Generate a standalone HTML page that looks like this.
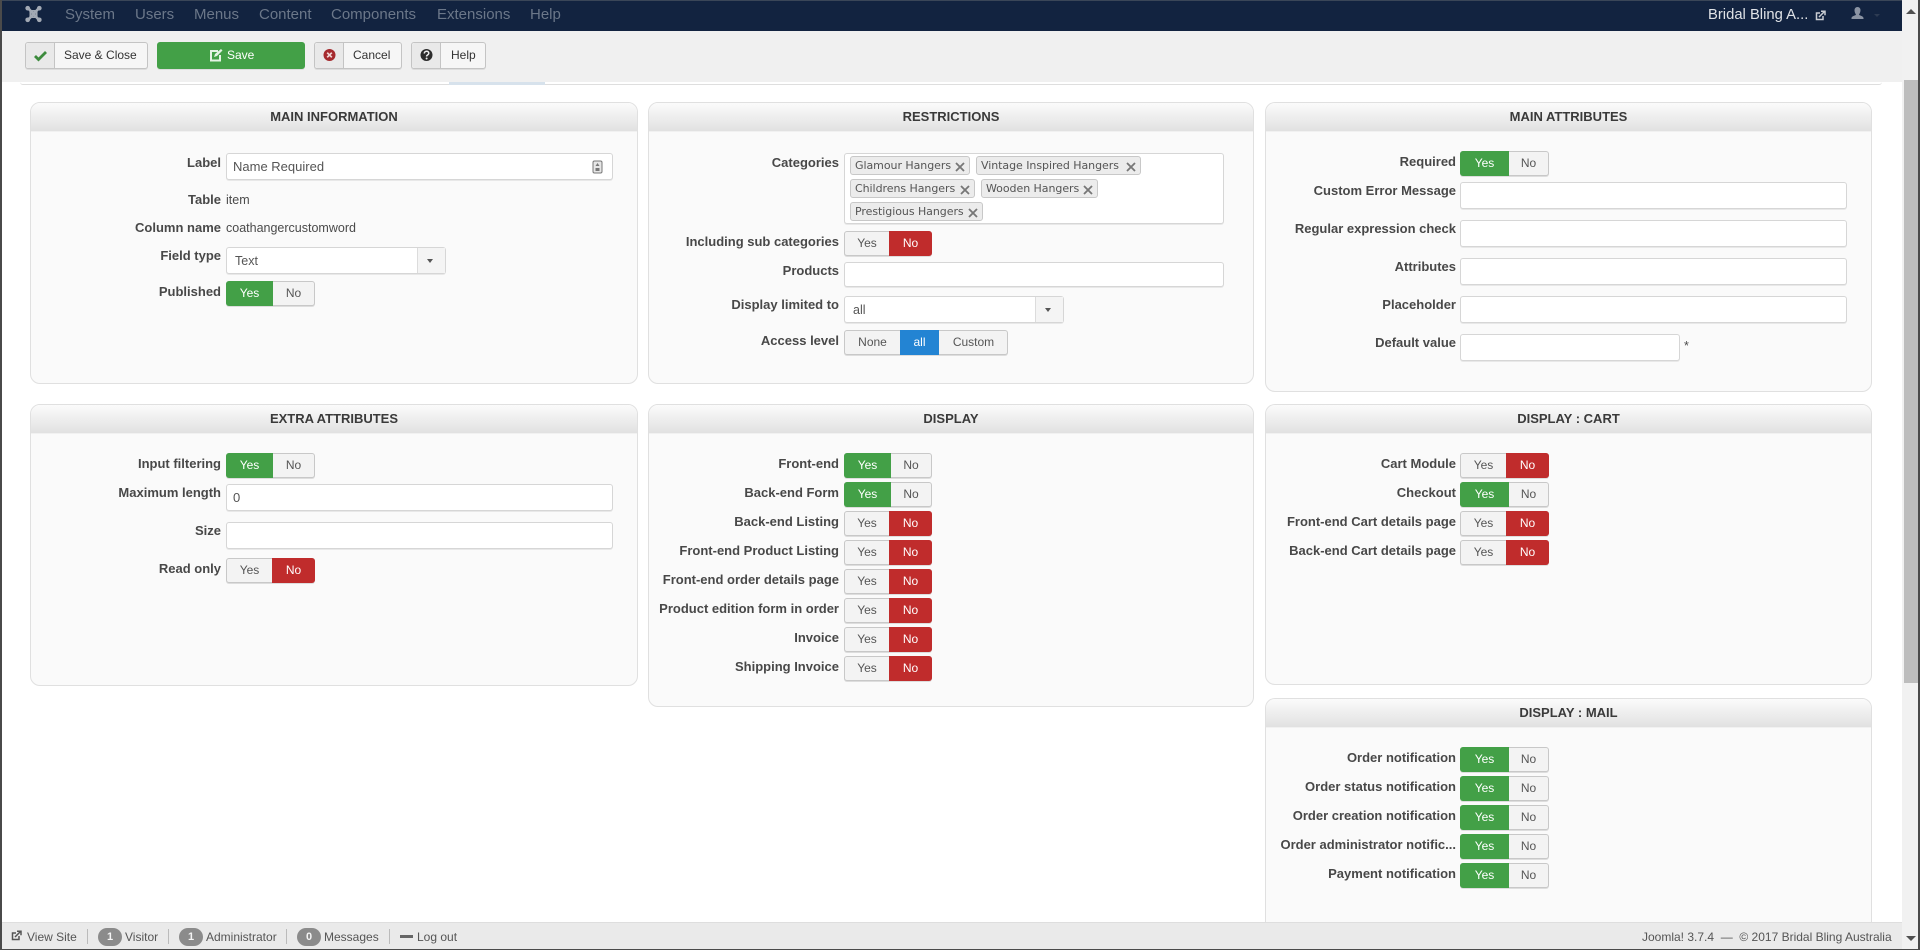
<!DOCTYPE html>
<html lang="en"><head><meta charset="utf-8"><title>Field edit</title>
<style>
*{box-sizing:border-box}
html,body{margin:0;padding:0;width:1920px;height:950px;overflow:hidden;background:#fff;font-family:"Liberation Sans",Arial,sans-serif;color:#444}
#w{position:absolute;left:0;top:0;width:1920px;height:950px;overflow:hidden}
.a,.l,.v,.p,.h,.t,.i,.s,.tg,.b,.f,.n{position:absolute}
.nav{position:absolute;left:0;top:0;width:1902px;height:31px;background:#122340;border-top:1px solid #3a4658}
.n{top:6px;font-size:15px;line-height:18px;color:#6b7789;white-space:nowrap}
.bar{position:absolute;left:0;top:31px;width:1902px;height:51px;background:#f0f0f0}
.b{top:42px;height:27px;border:1px solid #c4c4c4;border-radius:3px;background:#f6f6f6;font-size:12px;line-height:25px;color:#333;box-shadow:0 1px 0 #ddd}
.b em{position:absolute;left:0;top:0;bottom:0;width:29px;background:#e9e9e9;border-right:1px solid #c4c4c4;border-radius:3px 0 0 3px}
.b em svg{position:absolute;left:7px;top:5px}
.b span{position:absolute;white-space:nowrap}
.p{background:#fafafa;border:1px solid #e0e0e0;border-radius:10px;overflow:hidden}
.h{left:0;right:0;top:0;height:29px;background:linear-gradient(#fbfbfb,#e1e1e1);text-align:center;font-weight:bold;font-size:13px;line-height:28px;color:#3a3a3a;border-bottom:1px solid #f1f1f1}
.l{font-weight:bold;font-size:13px;line-height:18px;color:#484848;text-align:right;white-space:nowrap}
.c1{left:30px;width:191px}.c2{left:640px;width:199px}.c3{left:1260px;width:196px}
.v{font-size:12.5px;line-height:18px;color:#4a4a4a;white-space:nowrap}
.i{height:27px;background:#fff;border:1px solid #d6d6d6;border-radius:3px;font-size:13px;line-height:25px;padding-left:6px;color:#555;box-shadow:0 1px 0 #e8e8e8}
.s{height:27px;background:#fff;border:1px solid #d6d6d6;border-radius:3px;font-size:12.5px;line-height:27px;padding-left:8px;color:#555;box-shadow:0 1px 0 #e8e8e8}
.s u{position:absolute;right:0;top:0;bottom:0;width:28px;background:#f4f4f4;border-left:1px solid #dcdcdc;text-decoration:none}
.s u:after{content:"";position:absolute;left:9px;top:11px;border:3.500px solid transparent;border-top:4px solid #555;border-bottom:0}
.t{width:89px;height:25px;border:1px solid #c8c8c8;border-radius:3px;background:#f3f3f3;font-size:12px;line-height:24px;color:#555;box-shadow:0 1px 0 #ddd}
.t b,.t i{position:absolute;top:-1px;bottom:-1px;font-weight:normal;font-style:normal;text-align:center;color:#555}
.ty b{left:-1px;width:47px;background:#43a047;color:#fff;border-radius:3px 0 0 3px}
.ty i{left:46px;width:41px}
.tn b{left:0;width:45px}
.tn i{left:45px;width:43px;right:-1px;background:#c02c2c;color:#fff;border-radius:0 3px 3px 0}
.m{width:88px}
.m.tn b{width:44px}.m.tn i{left:44px}
.m.ty i{width:40px}
.w.ty b{width:49px}.w.ty i{left:48px;width:39px}
.tg{height:19px;background:#ececec;border:1px solid #c8c8c8;border-radius:3px;font-family:"DejaVu Sans",sans-serif;font-size:11px;line-height:17px;padding-left:4px;color:#555;white-space:nowrap;letter-spacing:-.05px}
.tg svg{position:absolute;right:4px;top:5px}
.foot{position:absolute;left:0;top:922px;width:1902px;height:27px;background:#eaeaea;border-top:1px solid #dedede}
.f{top:6px;font-size:12px;line-height:16px;color:#555;white-space:nowrap}
.o{position:absolute;top:5px;height:18px;width:24px;background:#8b8b8b;border-radius:9px;color:#f4f4f4;font-size:11px;font-weight:bold;line-height:18px;text-align:center}
.sp{position:absolute;top:6px;width:1px;height:15px;background:#bbb}
</style></head><body><div id="w">

<div class="nav"></div>
<svg class="a" style="left:25px;top:5px" width="17" height="18" viewBox="0 0 19 20"><g fill="none" stroke="#a2a9b4" stroke-width="3" stroke-linecap="round"><path d="M4 4l11 12M15 4L4 16"/><path d="M6 6.500h7v7H6z" stroke-width="2"/></g><g fill="#a2a9b4"><circle cx="3" cy="3.500" r="2.600"/><circle cx="16" cy="3.500" r="2.600"/><circle cx="3" cy="16.500" r="2.600"/><circle cx="16" cy="16.500" r="2.600"/></g></svg>
<div class="n" style="left:65px">System</div>
<div class="n" style="left:135px">Users</div>
<div class="n" style="left:194px">Menus</div>
<div class="n" style="left:259px">Content</div>
<div class="n" style="left:331px">Components</div>
<div class="n" style="left:437px">Extensions</div>
<div class="n" style="left:530px">Help</div>
<div class="n" style="left:1708px;color:#dfe2e6;font-size:14.8px">Bridal Bling A...</div>
<svg class="a" style="left:1815px;top:10px" width="11" height="11" viewBox="0 0 11 11"><path d="M8 6v3.500H1.500V3H5" fill="none" stroke="#c9cdd3" stroke-width="1.500"/><path d="M4 7l5-5M6 1.200h4v4" fill="none" stroke="#c9cdd3" stroke-width="1.500"/></svg>
<svg class="a" style="left:1851px;top:7px" width="13" height="13" viewBox="0 0 13 13"><path d="M6.500 0c2 0 3 1.500 3 3.300S8.500 7 8 7.500c0 1 4.500 1.500 4.500 3.500v1H.500v-1C.500 9 5 8.500 5 7.500 4.500 7 3.500 5.100 3.500 3.300S4.500 0 6.500 0z" fill="#8a93a3"/></svg>
<div class="a" style="left:1874px;top:14px;border:3px solid transparent;border-top:3px solid #2d3b52"></div>

<div class="bar"></div>
<div class="a" style="left:20px;top:82px;width:1862px;height:3px;background:#fff;border-bottom:1px solid #dedede;border-radius:0 0 5px 5px"></div>
<div class="a" style="left:449px;top:82px;width:96px;height:3px;background:#d7e2ec"></div>

<div class="b" style="left:25px;width:123px"><em><svg width="15" height="15" viewBox="0 0 15 15"><path d="M2 8l3.500 3.500L13 4" fill="none" stroke="#3d8b3d" stroke-width="2.800"/></svg></em><span style="left:38px">Save &amp; Close</span></div>
<div class="b" style="left:157px;width:148px;background:#43a047;border-color:#43a047;color:#fff"><svg class="a" style="left:51px;top:5px" width="14" height="14" viewBox="0 0 14 14"><path d="M9 3H2v9.500h9V7" fill="none" stroke="#e4f3e4" stroke-width="2"/><path d="M5 9l1-3 6-5 1.500 1.500L8 8z" fill="#e4f3e4"/></svg><span style="left:69px;font-size:12px">Save</span></div>
<div class="b" style="left:314px;width:88px"><em><svg width="15" height="15" viewBox="0 0 15 15"><circle cx="7.500" cy="7" r="6" fill="#a52a2e"/><path d="M5.200 4.700l4.600 4.600M9.800 4.700l-4.600 4.600" stroke="#f0d8d8" stroke-width="1.700"/></svg></em><span style="left:38px">Cancel</span></div>
<div class="b" style="left:411px;width:75px"><em><svg width="15" height="15" viewBox="0 0 15 15"><circle cx="7.500" cy="7" r="6" fill="#2c2c2c"/><path d="M5.300 5.500c0-3 4.500-3 4.500-.2 0 1.700-2.200 1.500-2.200 3.200" fill="none" stroke="#eee" stroke-width="1.500"/><circle cx="7.600" cy="10.500" r="1" fill="#eee"/></svg></em><span style="left:39px">Help</span></div>

<!-- MAIN INFORMATION -->
<div class="p" style="left:30px;top:102px;width:608px;height:282px"><div class="h">MAIN INFORMATION</div></div>
<div class="l c1" style="top:154px">Label</div>
<div class="i" style="left:226px;top:153px;width:387px">Name Required<svg class="a" style="right:9px;top:6px" width="11" height="14" viewBox="0 0 11 14"><rect x="1" y="1" width="9" height="12" rx="1.500" fill="#e6e6e6" stroke="#777"/><path d="M5.500 3l2 3h-4zM3.500 8h4v3h-4z" fill="#777"/></svg></div>
<div class="l c1" style="top:191px">Table</div><div class="v" style="left:226px;top:191px">item</div>
<div class="l c1" style="top:219px">Column name</div><div class="v" style="left:226px;top:219px">coathangercustomword</div>
<div class="l c1" style="top:247px">Field type</div>
<div class="s" style="left:226px;top:247px;width:220px">Text<u></u></div>
<div class="l c1" style="top:283px">Published</div>
<div class="t ty" style="left:226px;top:281px"><b>Yes</b><i>No</i></div>

<!-- RESTRICTIONS -->
<div class="p" style="left:648px;top:102px;width:606px;height:282px"><div class="h">RESTRICTIONS</div></div>
<div class="l c2" style="top:154px">Categories</div>
<div class="i" style="left:844px;top:153px;width:380px;height:71px"></div>
<div class="tg" style="left:850px;top:156px;width:120px">Glamour Hangers<svg width="10" height="10" viewBox="0 0 10 10"><path d="M1 1l8 8M9 1L1 9" stroke="#777" stroke-width="1.800"/></svg></div>
<div class="tg" style="left:976px;top:156px;width:165px">Vintage Inspired Hangers<svg width="10" height="10" viewBox="0 0 10 10"><path d="M1 1l8 8M9 1L1 9" stroke="#777" stroke-width="1.800"/></svg></div>
<div class="tg" style="left:850px;top:179px;width:125px">Childrens Hangers<svg width="10" height="10" viewBox="0 0 10 10"><path d="M1 1l8 8M9 1L1 9" stroke="#777" stroke-width="1.800"/></svg></div>
<div class="tg" style="left:981px;top:179px;width:117px">Wooden Hangers<svg width="10" height="10" viewBox="0 0 10 10"><path d="M1 1l8 8M9 1L1 9" stroke="#777" stroke-width="1.800"/></svg></div>
<div class="tg" style="left:850px;top:202px;width:133px">Prestigious Hangers<svg width="10" height="10" viewBox="0 0 10 10"><path d="M1 1l8 8M9 1L1 9" stroke="#777" stroke-width="1.800"/></svg></div>
<div class="l c2" style="top:233px">Including sub categories</div>
<div class="t tn m" style="left:844px;top:231px"><b>Yes</b><i>No</i></div>
<div class="l c2" style="top:262px">Products</div>
<div class="i" style="left:844px;top:262px;width:380px;height:25px"></div>
<div class="l c2" style="top:296px">Display limited to</div>
<div class="s" style="left:844px;top:296px;width:220px">all<u></u></div>
<div class="l c2" style="top:332px">Access level</div>
<div class="t" style="left:844px;top:330px;width:164px"><b style="left:0;width:55px">None</b><b style="left:55px;width:39px;background:#2384d3;color:#fff">all</b><b style="left:94px;width:69px">Custom</b></div>

<!-- MAIN ATTRIBUTES -->
<div class="p" style="left:1265px;top:102px;width:607px;height:290px"><div class="h">MAIN ATTRIBUTES</div></div>
<div class="l c3" style="top:153px">Required</div>
<div class="t ty w" style="left:1460px;top:151px"><b>Yes</b><i>No</i></div>
<div class="l c3" style="top:182px">Custom Error Message</div><div class="i" style="left:1460px;top:182px;width:387px"></div>
<div class="l c3" style="top:220px">Regular expression check</div><div class="i" style="left:1460px;top:220px;width:387px"></div>
<div class="l c3" style="top:258px">Attributes</div><div class="i" style="left:1460px;top:258px;width:387px"></div>
<div class="l c3" style="top:296px">Placeholder</div><div class="i" style="left:1460px;top:296px;width:387px"></div>
<div class="l c3" style="top:334px">Default value</div><div class="i" style="left:1460px;top:334px;width:220px"></div>
<div class="v" style="left:1684px;top:337px">*</div>

<!-- EXTRA ATTRIBUTES -->
<div class="p" style="left:30px;top:404px;width:608px;height:282px"><div class="h">EXTRA ATTRIBUTES</div></div>
<div class="l c1" style="top:455px">Input filtering</div>
<div class="t ty" style="left:226px;top:453px"><b>Yes</b><i>No</i></div>
<div class="l c1" style="top:484px">Maximum length</div><div class="i" style="left:226px;top:484px;width:387px">0</div>
<div class="l c1" style="top:522px">Size</div><div class="i" style="left:226px;top:522px;width:387px"></div>
<div class="l c1" style="top:560px">Read only</div>
<div class="t tn" style="left:226px;top:558px"><b>Yes</b><i>No</i></div>

<!-- DISPLAY -->
<div class="p" style="left:648px;top:404px;width:606px;height:303px"><div class="h">DISPLAY</div></div>
<div class="l c2" style="top:455px">Front-end</div><div class="t ty m" style="left:844px;top:453px"><b>Yes</b><i>No</i></div>
<div class="l c2" style="top:484px">Back-end Form</div><div class="t ty m" style="left:844px;top:482px"><b>Yes</b><i>No</i></div>
<div class="l c2" style="top:513px">Back-end Listing</div><div class="t tn m" style="left:844px;top:511px"><b>Yes</b><i>No</i></div>
<div class="l c2" style="top:542px">Front-end Product Listing</div><div class="t tn m" style="left:844px;top:540px"><b>Yes</b><i>No</i></div>
<div class="l c2" style="top:571px">Front-end order details page</div><div class="t tn m" style="left:844px;top:569px"><b>Yes</b><i>No</i></div>
<div class="l c2" style="top:600px">Product edition form in order</div><div class="t tn m" style="left:844px;top:598px"><b>Yes</b><i>No</i></div>
<div class="l c2" style="top:629px">Invoice</div><div class="t tn m" style="left:844px;top:627px"><b>Yes</b><i>No</i></div>
<div class="l c2" style="top:658px">Shipping Invoice</div><div class="t tn m" style="left:844px;top:656px"><b>Yes</b><i>No</i></div>

<!-- DISPLAY : CART -->
<div class="p" style="left:1265px;top:404px;width:607px;height:281px"><div class="h">DISPLAY : CART</div></div>
<div class="l c3" style="top:455px">Cart Module</div><div class="t tn" style="left:1460px;top:453px"><b>Yes</b><i>No</i></div>
<div class="l c3" style="top:484px">Checkout</div><div class="t ty w" style="left:1460px;top:482px"><b>Yes</b><i>No</i></div>
<div class="l c3" style="top:513px">Front-end Cart details page</div><div class="t tn" style="left:1460px;top:511px"><b>Yes</b><i>No</i></div>
<div class="l c3" style="top:542px">Back-end Cart details page</div><div class="t tn" style="left:1460px;top:540px"><b>Yes</b><i>No</i></div>

<!-- DISPLAY : MAIL -->
<div class="p" style="left:1265px;top:698px;width:607px;height:235px;border-radius:10px 10px 0 0"><div class="h">DISPLAY : MAIL</div></div>
<div class="l c3" style="top:749px">Order notification</div><div class="t ty w" style="left:1460px;top:747px"><b>Yes</b><i>No</i></div>
<div class="l c3" style="top:778px">Order status notification</div><div class="t ty w" style="left:1460px;top:776px"><b>Yes</b><i>No</i></div>
<div class="l c3" style="top:807px">Order creation notification</div><div class="t ty w" style="left:1460px;top:805px"><b>Yes</b><i>No</i></div>
<div class="l c3" style="top:836px">Order administrator notific...</div><div class="t ty w" style="left:1460px;top:834px"><b>Yes</b><i>No</i></div>
<div class="l c3" style="top:865px">Payment notification</div><div class="t ty w" style="left:1460px;top:863px"><b>Yes</b><i>No</i></div>

<!-- Footer -->
<div class="foot">
<svg class="a" style="left:11px;top:7px" width="11" height="11" viewBox="0 0 11 11"><path d="M8 6v3.500H1.500V3H5" fill="none" stroke="#555" stroke-width="1.500"/><path d="M4 7l5-5M6 1.200h4v4" fill="none" stroke="#555" stroke-width="1.500"/></svg>
<div class="f" style="left:27px">View Site</div><div class="sp" style="left:87px"></div>
<div class="o" style="left:98px">1</div><div class="f" style="left:125px">Visitor</div><div class="sp" style="left:168px"></div>
<div class="o" style="left:179px">1</div><div class="f" style="left:206px">Administrator</div><div class="sp" style="left:286px"></div>
<div class="o" style="left:297px">0</div><div class="f" style="left:324px">Messages</div><div class="sp" style="left:389px"></div>
<div class="a" style="left:400px;top:12px;width:13px;height:3px;background:#666"></div>
<div class="f" style="left:417px">Log out</div>
<div class="f" style="left:1642px">Joomla! 3.7.4 &nbsp;— &nbsp;© 2017 Bridal Bling Australia</div>
</div>

<!-- Scrollbar & window edges -->
<div class="a" style="left:1902px;top:0;width:18px;height:950px;background:#f1f1f1"></div>
<div class="a" style="left:1904px;top:80px;width:14px;height:603px;background:#bdbdbd"></div>
<div class="a" style="left:1906px;top:9px;border:5px solid transparent;border-bottom:5px solid #505050;border-top:0"></div>
<div class="a" style="left:1906px;top:936px;border:5px solid transparent;border-top:5px solid #505050;border-bottom:0"></div>
<div class="a" style="left:0;top:0;width:1.500px;height:950px;background:#4a4a4a"></div>
<div class="a" style="left:1918px;top:0;width:2px;height:950px;background:#4a4a4a"></div>
<div class="a" style="left:0;top:948.500px;width:1920px;height:1.500px;background:#4a4a4a"></div>
</div></body></html>
